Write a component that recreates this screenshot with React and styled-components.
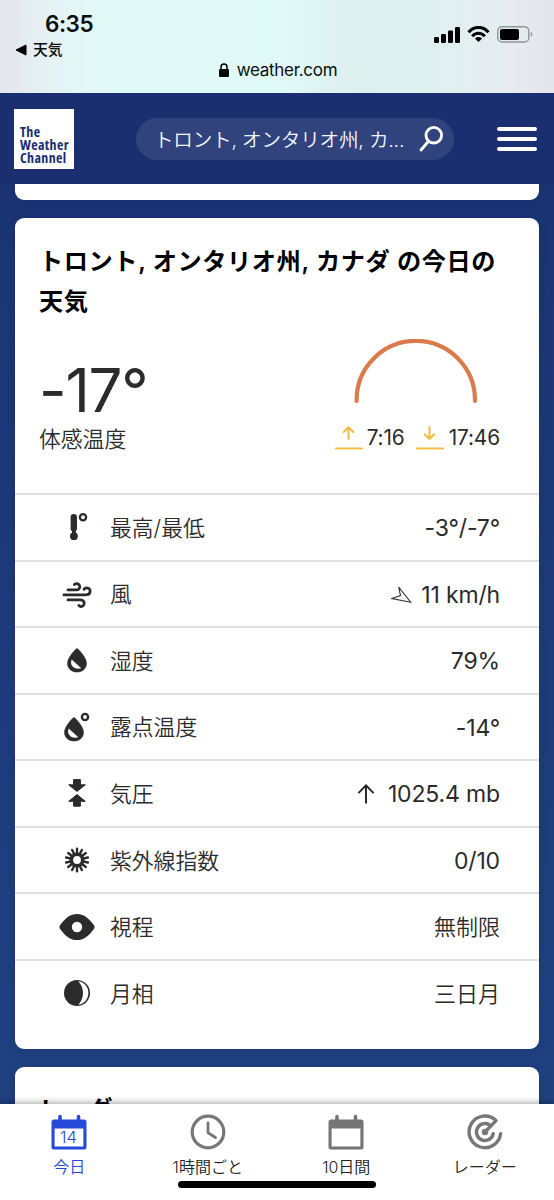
import React from 'react';
import styled, { createGlobalStyle } from 'styled-components';

const Global = createGlobalStyle`
  *{box-sizing:border-box}
  body{margin:0;background:#1e4080;font-family:Inter,"Noto Sans CJK JP",sans-serif;color:#2b2b2b}
  svg{display:block;flex:none}
`;
const Screen = styled.div`
  width:554px;height:1200px;overflow:hidden;display:flex;flex-direction:column;
  background:linear-gradient(180deg,#1a2f70 0,#1b3474 220px,#1f4180 1100px);
`;
const StatusBar = styled.header`
  height:93px;flex:none;color:#0b0f10;
  background:linear-gradient(90deg,#e5e6ee 0,#e5f2f4 50px,#e2faf8 105px,#e0faf7 280px,#dcf0ef 350px,#e0f0f0 440px,#e6ecef 510px,#e5e5ec 554px);
`;
const StatusTop = styled.div`
  height:60px;display:flex;justify-content:space-between;padding:11px 21px 0 15px;
`;
const Clock = styled.div`
  font-size:22.5px;line-height:26px;font-weight:600;padding-left:30px;letter-spacing:-.5px;
`;
const BackLink = styled.div`
  display:flex;align-items:center;gap:6px;font-size:14.8px;line-height:26px;font-weight:500;
`;
const Signals = styled.div`
  display:flex;gap:7px;align-items:flex-start;padding-top:15px;
`;
const Address = styled.div`
  display:flex;align-items:center;justify-content:center;gap:8px;height:20px;font-size:17px;letter-spacing:-.3px;padding-left:2px;
`;
const SiteHeader = styled.div`
  height:91px;flex:none;background:#1b2e70;display:flex;align-items:center;padding:0 17px 0 14px;
`;
const Logo = styled.div`
  width:60px;height:60px;background:#fff;color:#1b2e70;padding:16px 0 0 6px;
  font:700 14px/13px "Open Sans",sans-serif;font-stretch:75%;letter-spacing:.35px;
`;
const Search = styled.div`
  width:318px;height:42px;margin:0 43px 0 62px;border-radius:21px;background:#30437d;color:#f4f6ff;
  display:flex;align-items:center;justify-content:space-between;padding:0 10px 0 18px;
  font-size:19.6px;font-weight:350;white-space:nowrap;letter-spacing:-.22px;
`;
const Menu = styled.div`
  display:flex;flex-direction:column;gap:6px;
`;
const MenuLine = styled.div`
  width:40px;height:4px;border-radius:2px;background:#fff;
`;
const Content = styled.main`
  flex:1;min-height:0;overflow:hidden;padding:0 15px;display:flex;flex-direction:column;gap:18px;
`;
const Card = styled.section`
  flex:none;background:#fff;border-radius:9px;height:${p => p.$h}px;
  box-shadow:0 0 6px rgba(20,36,104,.3);
  ${p => p.$cut && 'border-top-left-radius:0;border-top-right-radius:0;'}
`;
const Title = styled.h2`
  margin:0;padding:${p => p.$top}px 24px 0;font-size:24.2px;line-height:40px;font-weight:600;color:#000;white-space:nowrap;
  letter-spacing:${p => p.$ls || 0}px;
`;
const Summary = styled.div`
  display:flex;justify-content:space-between;height:171.5px;padding:17px 39px 0 24px;
`;
const Temp = styled.div`
  font-size:60px;line-height:68px;padding-top:17px;height:85px;letter-spacing:-1.2px;
`;
const FeelsLike = styled.div`
  font-size:21.8px;line-height:30px;font-weight:350;
`;
const Sun = styled.div`
  display:flex;flex-direction:column;align-items:flex-end;
`;
const SunTimes = styled.div`
  display:flex;font-size:20.8px;line-height:26px;margin-top:20px;letter-spacing:-.1px;
`;
const SunTime = styled.div`
  display:flex;gap:${p => p.$gap}px;margin-left:11px;
`;
const Row = styled.div`
  display:flex;align-items:center;height:66.55px;border-top:2px solid #e0e0e0;padding-right:39px;
`;
const IconSlot = styled.div`
  width:95px;padding-left:28px;display:flex;justify-content:center;
`;
const Label = styled.div`
  flex:1;font-size:21.8px;line-height:30px;font-weight:350;padding-top:1px;
`;
const Value = styled.div`
  display:flex;align-items:center;gap:${p => p.$gap || 0}px;line-height:30px;
  font-size:${p => p.$kanji ? 22 : 23}px;font-weight:${p => p.$kanji ? 350 : 400};
  letter-spacing:${p => p.$kanji ? 0 : '-.15px'};padding-top:${p => p.$kanji ? 1 : 2}px;
`;
const Nav = styled.nav`
  height:96px;flex:none;background:#fff;display:grid;grid-template-columns:repeat(4,1fr);
  box-shadow:0 -2px 6px rgba(0,0,0,.3);position:relative;
`;
const Tab = styled.div`
  display:flex;flex-direction:column;align-items:center;padding-top:10px;gap:5px;
  font-size:16px;line-height:24px;font-weight:350;color:${p => p.$active ? '#2447d8' : '#222'};
`;
const HomeBar = styled.div`
  position:absolute;left:178px;top:77px;width:198px;height:7px;border-radius:4px;background:#000;
`;

const K = '#2b2b2b';
const Drop = ({ x = 0, y = 0 }) => (
  <g transform={`translate(${x} ${y})`}>
    <path d="M9.5 .6C10.2.2 19 9.5 19 15.2C19 20.5 15 24 9.5 24S0 20.5 0 15.2C0 9.5 8.8.2 9.5.6Z" fill={K} stroke={K} strokeWidth=".6" />
    <path d="M4.2 11.5 13.8 20.2C7.5 22.2 1.6 17.8 4.2 11.5Z" fill="#fff" />
  </g>
);
const icons = {
  temp: <svg width="36" height="32" viewBox="0 0 36 32"><path d="M14.8 6.3V17.2" stroke={K} strokeWidth="6.4" strokeLinecap="round" /><path d="M13 18h3.8v6h-3.8z" fill={K} /><circle cx="14.9" cy="25.2" r="3.9" fill={K} /><circle cx="24" cy="6.3" r="3.1" fill="none" stroke={K} strokeWidth="2.3" /></svg>,
  wind: <svg width="36" height="32" viewBox="0 0 36 32" fill="none" stroke={K} strokeWidth="2.8" strokeLinecap="round"><path d="M9 11.9H17.5C22 11.9 21.8 5.2 17.2 5.6Q15.9 5.7 15.4 6.5" /><path d="M4.9 16.9H26.5C32.5 16.9 32.4 9.8 27.7 9.8Q25.7 9.8 25 11.4" /><path d="M9 21.9H21.6C26.6 21.9 26 28.8 21.8 28.5Q20.3 28.4 19.8 27.4" /></svg>,
  humidity: <svg width="36" height="32" viewBox="0 0 36 32"><Drop x={8.5} y={4} /></svg>,
  dew: <svg width="36" height="32" viewBox="0 0 36 32"><Drop x={5.5} y={6} /><circle cx="26" cy="6" r="3.1" fill="none" stroke={K} strokeWidth="2.4" /></svg>,
  pressure: <svg width="36" height="32" viewBox="0 0 36 32" fill={K} stroke={K} strokeLinejoin="round"><path d="M14.6 2.6H21.4V7.8H26.3L18 14.4 9.7 7.8H14.6ZM14.6 29.2H21.4V24.3H26.3L18 17.6 9.7 24.3H14.6Z" /></svg>,
  uv: <svg width="36" height="32" viewBox="0 0 36 32"><circle cx="18" cy="16" r="5.7" fill="none" stroke={K} strokeWidth="3.6" />{Array.from({ length: 14 }, (_, i) => <path key={i} d="M18 10V4.8" stroke={K} strokeWidth="2.4" strokeLinecap="round" transform={`rotate(${i * 360 / 14} 18 16)`} />)}</svg>,
  eye: <svg width="36" height="32" viewBox="0 0 36 32"><path fillRule="evenodd" fill={K} d="M.8 14.6C6.5 6.7 11.5 3 18 3S29.5 6.7 35.2 14.6Q36 16 35.2 17.4C29.5 25.3 24.5 29 18 29S6.5 25.3.8 17.4Q0 16 .8 14.6ZM18 10.8A5.2 5.2 0 1 0 18 21.2A5.2 5.2 0 0 0 18 10.8Z" /></svg>,
  moon: <svg width="36" height="32" viewBox="0 0 36 32"><circle cx="18" cy="16" r="13" fill={K} /><path d="M19.3 4.2C32.8 6.5 32.8 25.5 19.3 27.8C25.6 21 25.6 11 19.3 4.2Z" fill="#fff" /></svg>,
};
const WindArrow = () => <svg width="21" height="18" viewBox="0 0 21 18" fill="none" stroke="#333" strokeWidth="1.1"><path d="M7.7 1.2 19.7 16.2 1 12.6 9.5 9.6Z" /></svg>;
const UpArrow = () => <svg width="20" height="22" viewBox="0 0 20 22" fill="none" stroke="#222" strokeWidth="1.9"><path d="M9 20.5V3M1.4 10.2 9 2.4 16.6 10.2" /></svg>;
const SunMark = ({ down }) => <svg width="28" height="26" viewBox="0 0 28 26" fill="none" stroke="#f0bb45" strokeWidth="2" strokeLinecap="round" strokeLinejoin="round"><path d={down ? 'M13.5 2V13M8.7 9.3 13.5 14 18.3 9.3' : 'M13.5 14V3M8.7 7 13.5 2.3 18.3 7'} /><path d="M1 23.5H27" /></svg>;

const rows = [
  ['temp', '最高/最低', '-3°/-7°'],
  ['wind', '風', '11 km/h', <WindArrow key="a" />, 9],
  ['humidity', '湿度', '79%'],
  ['dew', '露点温度', '-14°'],
  ['pressure', '気圧', '1025.4 mb', <UpArrow key="a" />, 11],
  ['uv', '紫外線指数', '0/10'],
  ['eye', '視程', '無制限'],
  ['moon', '月相', '三日月'],
];

const CalendarIcon = ({ color, day }) => (
  <svg width="36" height="36" viewBox="0 0 36 36"><path d="M9 2.5V7M27.5 2.5V7" stroke={color} strokeWidth="3.6" strokeLinecap="round" /><path fillRule="evenodd" fill={color} d="M3 5.5H33Q35.5 5.5 35.5 8V33Q35.5 35.5 33 35.5H3Q.5 35.5.5 33V8Q.5 5.5 3 5.5ZM3.6 14.5V32.5H32.4V14.5Z" />
    {day && <text x="17.5" y="29" textAnchor="middle" fontSize="16.5" fontFamily="Inter" fill={color}>{day}</text>}</svg>
);
const ClockIcon = () => <svg width="36" height="36" viewBox="0 0 36 36" fill="none" stroke="#777" strokeWidth="3.2"><circle cx="18" cy="18" r="15.8" /><path d="M18 9V18.7L25.5 23.5" strokeWidth="2.8" strokeLinecap="round" strokeLinejoin="round" /></svg>;
const RadarIcon = () => <svg width="36" height="36" viewBox="0 0 36 36" fill="none" stroke="#777" strokeWidth="3.4" strokeLinecap="round" strokeLinejoin="round"><path d="M33.6 19.6A15.8 15.8 0 1 1 29 6.6L18 18" /><path d="M26.3 19.6A8.5 8.5 0 1 1 22.3 10.7" /><circle cx="18" cy="18" r="3.2" fill="#777" stroke="none" /></svg>;

export default function App() {
  return (
    <Screen>
      <Global />
      <StatusBar>
        <StatusTop>
          <div>
            <Clock>6:35</Clock>
            <BackLink><svg width="12" height="12" viewBox="0 0 12 12"><path d="M1 6 11 1V11Z" stroke="#000" strokeLinejoin="round" /></svg>天気</BackLink>
          </div>
          <Signals>
            <svg width="26" height="17" viewBox="0 0 26 17"><rect y="11" width="5" height="6" rx="1.2" /><rect x="7" y="8" width="5" height="9" rx="1.2" /><rect x="14" y="4.5" width="5" height="12.5" rx="1.2" /><rect x="21" y="1" width="5" height="16" rx="1.2" /></svg>
            <svg width="23" height="17" viewBox="0 0 23 17" fill="none" stroke="#000" strokeWidth="3"><path d="M1.5 6.3C7-.2 16-.2 21.5 6.3M5.2 10.2C8.7 6.2 14.3 6.2 17.8 10.2" /><path d="M11.5 16 7.9 12.5Q11.5 9.7 15.1 12.5Z" fill="#000" stroke="none" /></svg>
            <svg width="36" height="17" viewBox="0 0 36 17"><rect x=".8" y=".8" width="31" height="15.2" rx="4.2" fill="none" stroke="#8d9796" strokeWidth="1.4" /><rect x="3" y="3" width="19" height="11" rx="2" /><path d="M33.8 5.8Q37 8.4 33.8 11Z" fill="#8d9796" /></svg>
          </Signals>
        </StatusTop>
        <Address>
          <svg width="10" height="14" viewBox="0 0 10 14"><rect y="6" width="10" height="8" rx="1.3" /><path d="M2 7V4C2 0 8 0 8 4V7" fill="none" stroke="#000" strokeWidth="1.5" /></svg>
          weather.com
        </Address>
      </StatusBar>
      <SiteHeader>
        <Logo>The<br />Weather<br />Channel</Logo>
        <Search>
          <span>トロント, オンタリオ州, カ...</span>
          <svg width="26" height="28" viewBox="0 0 26 28" fill="none" stroke="#fff" strokeWidth="2.9" strokeLinecap="round"><circle cx="15.8" cy="10.2" r="7.8" /><path d="M10.5 16.3 3 25" /></svg>
        </Search>
        <Menu><MenuLine /><MenuLine /><MenuLine /></Menu>
      </SiteHeader>
      <Content>
        <Card $h={15.5} $cut />
        <Card $h={831.7}>
          <Title $top={24} $ls={0.6}>トロント, オンタリオ州, カナダ の今日の<br />天気</Title>
          <Summary>
            <div>
              <Temp>-17°</Temp>
              <FeelsLike>体感温度</FeelsLike>
            </div>
            <Sun>
              <svg width="146" height="66" viewBox="0 0 146 66"><path d="M2.6 62V61A59.2 59.2 0 0 1 121 61V62" fill="none" stroke="#d97b4a" strokeWidth="4.2" strokeLinecap="round" /></svg>
              <SunTimes>
                <SunTime $gap={4}><SunMark />7:16</SunTime>
                <SunTime $gap={5}><SunMark down />17:46</SunTime>
              </SunTimes>
            </Sun>
          </Summary>
          {rows.map(([icon, label, value, mark, gap]) => (
            <Row key={icon}>
              <IconSlot>{icons[icon]}</IconSlot>
              <Label>{label}</Label>
              <Value $gap={gap} $kanji={icon === 'eye' || icon === 'moon'}>{mark}{value}</Value>
            </Row>
          ))}
        </Card>
        <Card $h={200}><Title $top={22.5} $ls={0.4}>レーダー</Title></Card>
      </Content>
      <Nav>
        <Tab $active><CalendarIcon color="#2549d9" day="14" />今日</Tab>
        <Tab><ClockIcon />1時間ごと</Tab>
        <Tab><CalendarIcon color="#757575" />10日間</Tab>
        <Tab><RadarIcon />レーダー</Tab>
        <HomeBar />
      </Nav>
    </Screen>
  );
}
